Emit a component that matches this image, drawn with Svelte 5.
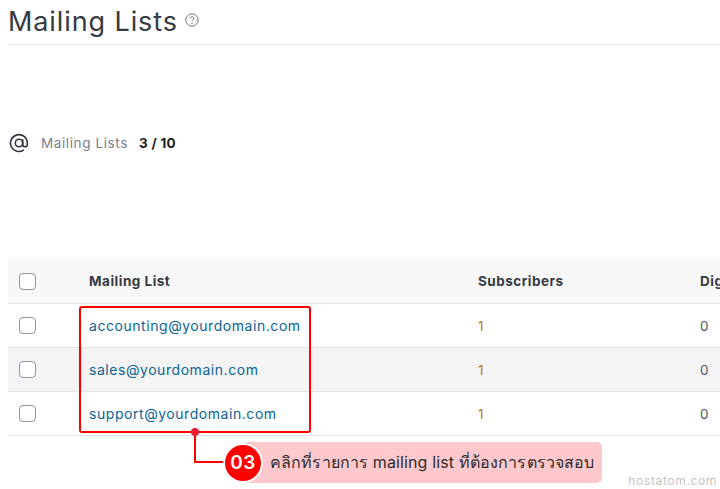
<script>
  const lists = [
    { address: "accounting@yourdomain.com", subscribers: 1, digest: 0 },
    { address: "sales@yourdomain.com", subscribers: 1, digest: 0 },
    { address: "support@yourdomain.com", subscribers: 1, digest: 0 }
  ];
</script>

<main class="page">
  <header class="title-bar">
    <h1>Mailing Lists</h1>
    <svg class="help" viewBox="0 0 14 14" width="14" height="14" aria-hidden="true">
      <circle cx="7" cy="7" r="6.2" fill="none" stroke="#6f7480" stroke-width="1" />
      <path d="M5.2 5.5a1.8 1.8 0 1 1 2.8 1.5c-.7.4-1 .8-1 1.5" fill="none" stroke="#6f7480" stroke-width="1" />
      <circle cx="7" cy="10.4" r=".7" fill="#6f7480" />
    </svg>
  </header>

  <section class="stats">
    <svg class="at" viewBox="0 0 20 20" width="20" height="20" aria-hidden="true">
      <circle cx="10" cy="10" r="3.7" fill="none" stroke="#33363d" stroke-width="1.6" />
      <path d="M13.7 6.3v5.2a2.3 2.3 0 0 0 4.6 0V10a8.4 8.4 0 1 0-3.4 6.8" fill="none" stroke="#33363d" stroke-width="1.6" />
    </svg>
    <span class="stat-label">Mailing Lists</span>
    <strong class="stat-value">3 / 10</strong>
  </section>

  <table>
    <colgroup>
      <col class="col-check" />
      <col class="col-list" />
      <col class="col-subs" />
      <col class="col-digest" />
    </colgroup>
    <thead>
      <tr>
        <th><span class="check"></span></th>
        <th>Mailing List</th>
        <th>Subscribers</th>
        <th>Digest</th>
      </tr>
    </thead>
    <tbody>
      {#each lists as list}
        <tr>
          <td><span class="check"></span></td>
          <td><a href="#list">{list.address}</a></td>
          <td class="num">{list.subscribers}</td>
          <td class="num">{list.digest}</td>
        </tr>
      {/each}
    </tbody>
  </table>

  <div class="highlight"></div>
  <div class="leader"></div>
  <div class="dot"></div>
  <div class="callout">
    <span class="badge">03</span>
    <span class="callout-text">คลิกที่รายการ mailing list ที่ต้องการตรวจสอบ</span>
  </div>
  <div class="watermark">hostatom.com</div>
</main>

<style>
  :global(body) {
    margin: 0;
    background: #fff;
    overflow: hidden;
  }

  .page {
    position: relative;
    width: 720px;
    height: 489px;
    overflow: hidden;
    padding-left: 8px;
    box-sizing: border-box;
    font-family: Inter, "Noto Sans", sans-serif;
    color: #33363d;
  }

  .title-bar {
    display: flex;
    align-items: center;
    gap: 8px;
    height: 44px;
    border-bottom: 1px solid #e6e6e6;
  }

  h1 {
    margin: 0;
    font-size: 27px;
    font-weight: 400;
    line-height: 42px;
    letter-spacing: 0.9px;
    color: #363a43;
  }

  .help {
    margin-top: -4px;
    margin-left: -1px;
  }

  .stats {
    display: flex;
    align-items: center;
    height: 20px;
    margin-top: 88px;
    padding-left: 1px;
    font-size: 13.5px;
  }

  .stat-label {
    margin-left: 12px;
    color: #7a808c;
    letter-spacing: 0.6px;
  }

  .stat-value {
    margin-left: 11px;
    font-weight: 700;
    letter-spacing: 0.3px;
    color: #1f2126;
  }

  table {
    width: 760px;
    margin-top: 106px;
    border-collapse: collapse;
    table-layout: fixed;
    font-size: 13.5px;
  }

  .col-check { width: 81px; }
  .col-list { width: 389px; }
  .col-subs { width: 222px; }
  .col-digest { width: 68px; }

  th {
    height: 44px;
    padding: 0;
    text-align: left;
    font-weight: 700;
    white-space: nowrap;
    background: #f8f8f8;
    color: #363a43;
    letter-spacing: 0.5px;
    border-bottom: 1px solid #e5e5ea;
  }

  td {
    height: 43px;
    padding: 0;
    border-bottom: 1px solid #e5e5e7;
  }

  tbody tr:nth-child(2) td {
    background: #f4f4f5;
  }

  th:first-child,
  td:first-child {
    padding-left: 11px;
  }

  .check {
    display: block;
    width: 15px;
    height: 15px;
    border: 1px solid #8f95a3;
    border-radius: 4px;
    background: #fff;
  }

  a {
    color: #0a6496;
    text-decoration: none;
    font-weight: 400;
    font-size: 14px;
    letter-spacing: 0.55px;
  }

  .num {
    color: #b07c2e;
  }

  td.num:last-child {
    color: #4f5663;
  }

  .highlight {
    position: absolute;
    left: 79px;
    top: 306px;
    width: 228px;
    height: 123px;
    border: 2px solid #f00;
    border-radius: 3px;
  }

  .leader {
    position: absolute;
    left: 194px;
    top: 432px;
    width: 36px;
    height: 29px;
    border-left: 2px solid #f00;
    border-bottom: 2px solid #f00;
  }

  .dot {
    position: absolute;
    left: 191px;
    top: 428px;
    width: 8px;
    height: 8px;
    border-radius: 50%;
    background: #e8202f;
  }

  .callout {
    position: absolute;
    left: 243px;
    top: 442px;
    display: flex;
    align-items: center;
    width: 359px;
    height: 41px;
    background: #ffc8cd;
    border-radius: 5px;
  }

  .badge {
    display: flex;
    align-items: center;
    justify-content: center;
    flex: none;
    width: 36px;
    height: 36px;
    margin-left: -18px;
    border-radius: 50%;
    background: #f00;
    color: #fff;
    font-size: 19px;
    font-weight: 600;
    letter-spacing: 0.5px;
    box-shadow: 0 0 0 2px #fff;
  }

  .callout-text {
    margin-left: 9px;
    font-size: 16px;
    letter-spacing: 0.12px;
    color: #2b2b2b;
    white-space: nowrap;
  }

  .watermark {
    position: absolute;
    right: 3px;
    top: 473px;
    font-size: 12px;
    letter-spacing: 0.65px;
    color: #c4c4c4;
  }
</style>
